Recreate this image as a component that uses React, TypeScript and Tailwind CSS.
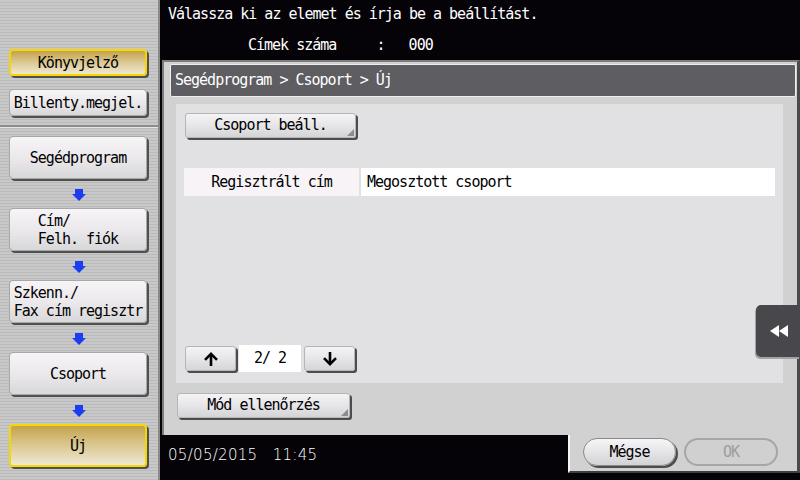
import React from "react";

const mono = "font-['DejaVu_Sans_Mono',monospace] text-[15px] tracking-[-1px]";

function BlueArrow() {
  return (
    <div className="h-[29px] flex items-center justify-center pt-[2px]">
      <svg width="14" height="12" viewBox="0 0 14 12">
        <rect x="3" y="0" width="8" height="5" fill="#1c3cf4" />
        <polygon points="0,5 14,5 7,12" fill="#1c3cf4" />
      </svg>
    </div>
  );
}

function SideBtn({
  children,
  gold,
  h,
  left,
}: {
  children: React.ReactNode;
  gold?: boolean;
  h: string;
  left?: boolean;
}) {
  return (
    <div
      className={`ml-[9px] w-[138px] ${h} rounded-[4px] flex items-center justify-center text-black leading-[18px] shadow-[2px_2px_0_#505050] ${
        gold
          ? "border-2 border-[#f6d700] bg-[linear-gradient(180deg,#c4a24a,#d9c58c_45%,#efe8d2)]"
          : "border border-[#a8a8a8] bg-[linear-gradient(180deg,#f6f4f6,#ebe9eb_50%,#d8d7d9)]"
      }`}
    >
      <div className={left ? "text-left" : "text-center"}>{children}</div>
    </div>
  );
}

function PanelBtn({
  children,
  w,
  corner,
}: {
  children: React.ReactNode;
  w: string;
  corner?: boolean;
}) {
  return (
    <div
      className={`relative ${w} h-[25px] rounded-[3px] border border-[#b5b5b5] bg-[linear-gradient(180deg,#f5f3f5,#e6e5e7_50%,#d5d4d6)] shadow-[2px_2px_0_#4c4c4c] flex items-center justify-center text-black`}
    >
      {children}
      {corner && (
        <span className="absolute right-[1px] bottom-[1px] w-0 h-0 border-l-[7px] border-l-transparent border-b-[7px] border-b-[#8c8c8c]" />
      )}
    </div>
  );
}

function ArrowIcon({ down }: { down?: boolean }) {
  return (
    <svg width="16" height="16" viewBox="0 0 16 16" style={{ transform: down ? "rotate(180deg)" : undefined }}>
      <path d="M8 15V3" stroke="#000" strokeWidth="2.6" />
      <path d="M2 8.8L8 2.8L14 8.8" stroke="#000" strokeWidth="2.6" fill="none" />
    </svg>
  );
}

export default function App() {
  return (
    <div className={`w-[800px] h-[480px] flex overflow-hidden bg-[#050307] ${mono}`}>
      {/* Sidebar */}
      <div className="w-[160px] h-[480px] shrink-0 flex flex-col border-r-2 border-r-[#8a8a8a] bg-[image:repeating-linear-gradient(180deg,#c8c8c8_0px,#c8c8c8_2px,#bababa_2px,#bababa_3px)]">
        <div className="h-[49px]" />
        <SideBtn gold h="h-[27px]">Könyvjelző</SideBtn>
        <div className="h-[13px]" />
        <SideBtn h="h-[27px]">Billenty.megjel.</SideBtn>
        <div className="h-[9px]" />
        <div className="h-[2px] bg-[#8c8c8c]" />
        <div className="h-[1px] bg-[#e4e4e4]" />
        <div className="h-[8px]" />
        <SideBtn h="h-[43px]">Segédprogram</SideBtn>
        <BlueArrow />
        <SideBtn h="h-[43px]" left>
          <div>Cím/</div>
          <div>Felh. fiók</div>
        </SideBtn>
        <BlueArrow />
        <SideBtn h="h-[43px]" left>
          <div>Szkenn./</div>
          <div>Fax cím regisztr</div>
        </SideBtn>
        <BlueArrow />
        <SideBtn h="h-[43px]">Csoport</SideBtn>
        <BlueArrow />
        <SideBtn gold h="h-[43px]">Új</SideBtn>
      </div>

      {/* Main */}
      <div className="flex-1 flex flex-col">
        <div className="h-[60px] text-white shrink-0">
          <div className="pl-[8px] pt-[4px] h-[24px] leading-[20px]">Válassza ki az elemet és írja be a beállítást.</div>
          <div className="pl-[88px] mt-[11px] leading-[20px] whitespace-pre">Címek száma     :   000</div>
        </div>

        <div className="relative ml-[2px] h-[375px] shrink-0 flex flex-col bg-[#d1d1d1] border-t-2 border-l-2 border-[#7c7c7c] border-r-[3px] border-r-[#4a4a4a]">
          <div className="ml-[6px] mt-[2px] w-[626px] h-[33px] shrink-0 rounded-[2px] border border-[#eeeeee] bg-[#5e5d61] text-white flex items-center pl-[4px]">
            Segédprogram &gt; Csoport &gt; Új
          </div>

          <div className="ml-[12px] mt-[7px] w-[607px] h-[279px] shrink-0 bg-[#e1e0e2] flex flex-col">
            <div className="ml-[9px] mt-[9px]">
              <PanelBtn w="w-[171px]" corner>
                Csoport beáll.
              </PanelBtn>
            </div>
            <div className="ml-[8px] mt-[30px] flex gap-[2px] h-[28px]">
              <div className="w-[175px] bg-[#f7f3f7] flex items-center justify-center text-black">Regisztrált cím</div>
              <div className="w-[414px] bg-white flex items-center pl-[6px] text-black">Megosztott csoport</div>
            </div>
            <div className="mt-auto mb-[11px] ml-[9px] flex items-start gap-[3px]">
              <PanelBtn w="w-[51px]">
                <ArrowIcon />
              </PanelBtn>
              <div className="w-[62px] h-[27px] -mt-[1px] bg-white flex items-center justify-center text-black whitespace-pre">2/ 2</div>
              <PanelBtn w="w-[51px]">
                <ArrowIcon down />
              </PanelBtn>
            </div>
          </div>

          <div className="ml-[13px] mt-[10px]">
            <PanelBtn w="w-[173px]" corner>
              Mód ellenőrzés
            </PanelBtn>
          </div>

          <div className="absolute right-[-3px] top-[243px] w-[44px] h-[52px] rounded-l-[5px] bg-[#48474b] shadow-[-1px_2px_0_#a3a3a3] flex items-center justify-center pl-[2px]">
            <svg width="18" height="12" viewBox="0 0 18 12">
              <polygon points="0,6 9,0 9,12" fill="#fff" />
              <polygon points="9,6 18,0 18,12" fill="#fff" />
            </svg>
          </div>
        </div>

        <div className="flex h-[45px] shrink-0">
          <div className="w-[408px] shrink-0 text-white pl-[8px] pt-[10px] font-['DejaVu_Sans',sans-serif] text-[15px] tracking-[0.3px] leading-[20px] whitespace-pre font-light">
            05/05/2015   11:45
          </div>
          <div className="flex-1 flex flex-col">
            <div className="h-[38px] bg-[#d1d1d1] border-l-2 border-l-[#f4f4f4] border-b-2 border-b-[#3e3e3e] border-r-[3px] border-r-[#4a4a4a] flex items-start pt-[3px] pl-[13px] gap-[8px]">
              <div className="w-[93px] h-[28px] rounded-full border border-[#8a8a8a] bg-[linear-gradient(180deg,#f7f5f7,#e5e4e6_50%,#d3d2d4)] shadow-[2px_2px_0_#4c4c4c] flex items-center justify-center text-black">
                Mégse
              </div>
              <div className="w-[94px] h-[28px] rounded-full border-2 border-[#a6a6a6] bg-[#d0d0d0] flex items-center justify-center text-[#9c9c9c]">
                OK
              </div>
            </div>
          </div>
        </div>
      </div>
    </div>
  );
}
